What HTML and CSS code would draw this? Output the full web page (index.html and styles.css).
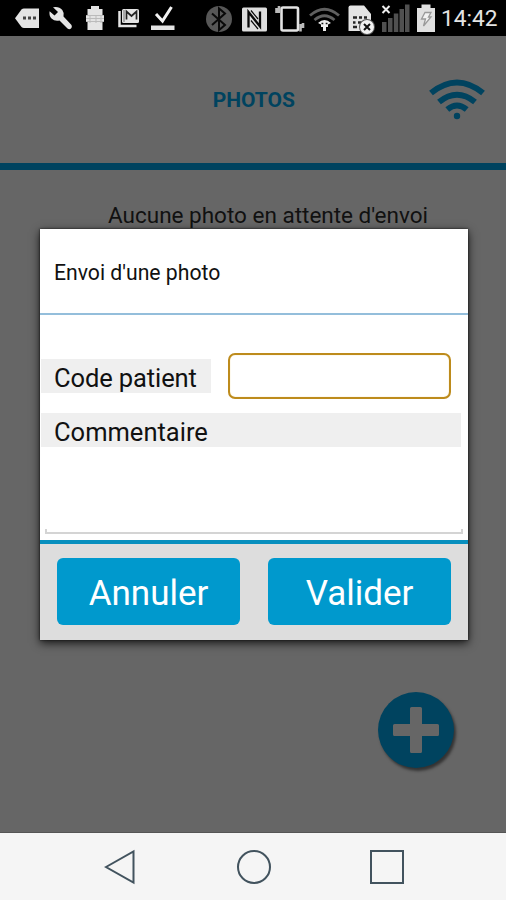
FILE: index.html
```html
<!DOCTYPE html>
<html lang="fr">
<head>
    <meta charset="UTF-8">
    <meta name="viewport" content="width=device-width, initial-scale=1.0">
    <title>Photos</title>
    <link rel="stylesheet" href="styles.css">
</head>
<body>
    <div class="status-bar">
        <!-- notifications -->
        <svg width="44" height="36" viewBox="0 0 44 36">
            <path d="M15 18.2L21.5 9.5Q22.500 8.500 24 8.500H39V28H24Q22.500 28 21.500 27Z" fill="#e4e4e4"/>
            <path d="M23 16.500h3v3h-3zM28 16.500h3v3h-3zM33 16.500h3v3h-3z" fill="#444"/>
        </svg>
        <svg width="34" height="36" viewBox="44 0 34 36">
            <path d="M53 7.200Q59 6 62.300 10Q64.500 13 63.500 16.500L71.500 25Q72.500 27 71 28.500Q69.300 29.800 67.500 28.500L59.500 20.500Q55 21.800 51.500 18.500Q48.800 15.500 49.600 11.200L54.500 15.500L58 12Z" fill="#e4e4e4"/>
        </svg>
        <svg width="34" height="36" viewBox="78 0 34 36">
            <path d="M91 6h8v3h3.500v6h1.500v7h-1.500v8h-15v-8H86v-7h1.500V9H91z" fill="#e4e4e4"/>
            <path d="M86 15.500h18M86 18.500h18M86 21.500h18M90 15v8M96 15v8M101 15v8" stroke="#bbb" fill="none"/>
        </svg>
        <svg width="34" height="36" viewBox="112 0 34 36">
            <path d="M119.500 11v15h17" stroke="#e4e4e4" stroke-width="2.500" fill="none"/>
            <rect x="122" y="9" width="17" height="14" rx="1.500" fill="#e4e4e4"/>
            <path d="M126.500 19.500v-8l5 4.500 5-4.500v8" stroke="#222" stroke-width="1.700" fill="none"/>
            <path d="M124 10v12" stroke="#aaa" stroke-width="2"/>
        </svg>
        <svg width="34" height="36" viewBox="146 0 34 36">
            <path d="M156 14l6.500 7L171.500 7" stroke="#f2f2f2" stroke-width="3" fill="none"/>
            <path d="M151 25.500h23.500v4.500H151z" fill="#e4e4e4"/>
        </svg>
        <!-- system -->
        <svg class="system" width="36" height="36" viewBox="202 0 36 36">
            <circle cx="219" cy="19" r="13" fill="#575757"/>
            <path d="M212 13.500l13 11.500-6 5V8.500l6 5-13 11.500" stroke="#090909" stroke-width="2" fill="none"/>
        </svg>
        <svg width="34" height="36" viewBox="238 0 34 36">
            <rect x="242" y="7.500" width="25" height="24" rx="1.500" fill="#dedede"/>
            <path d="M248.500 27.500V12L260 26.500V11.500" stroke="#080808" stroke-width="2.300" fill="none"/>
            <path d="M251 10.500l7 8.500M251 20.500l7 8.500" stroke="#080808" stroke-width="1.200"/>
        </svg>
        <svg width="35" height="36" viewBox="272 0 35 36">
            <rect x="281.500" y="7.500" width="16.500" height="23" rx="1.500" stroke="#e4e4e4" stroke-width="2.600" fill="none"/>
            <path d="M279 6v7M276.500 8v5M300.500 24v7.500M303 23v5" stroke="#bbb" stroke-width="2.600"/>
        </svg>
        <svg width="36" height="36" viewBox="307 0 36 36">
            <path d="M310 15.500Q324.500 3 339 15.500M314.500 20Q324.500 11.500 334.500 20" stroke="#606060" stroke-width="2.800" fill="none"/>
            <path d="M318 23q6.500-6 13 0l-3 1.500v2.500h-2v4h-3v-4h-2v-2.500z" fill="#eee"/>
            <path d="M321.500 23.500h1.800M325.700 23.500h1.800" stroke="#111" stroke-width="1.500"/>
        </svg>
        <svg width="34" height="36" viewBox="343 0 34 36">
            <path d="M348.500 7.500q0-2 2-2H364l7 8.500V31h-22.500z" fill="#e4e4e4"/>
            <path d="M353 17.500h4M353 22.500h2.500M353 27h4M359 17.500h3M358 22.500h3M364 17.500h3" stroke="#252525" stroke-width="2.500"/>
            <circle cx="367" cy="27" r="8" fill="#555"/>
            <circle cx="367" cy="27" r="7" fill="#f2f2f2"/>
            <path d="M364 24l6 6M370 24l-6 6" stroke="#111" stroke-width="2"/>
        </svg>
        <svg width="36" height="36" viewBox="377 0 36 36">
            <path d="M382.500 6l7 7M389.500 6l-7 7" stroke="#eee" stroke-width="2"/>
            <path d="M382 22h4.500v10H382zM388 18h4.500v14H388zM393.800 13.500h4.500V32h-4.500zM399.500 9h4.500v23h-4.500zM405 4.500h4.500V32H405z" fill="#505050"/>
        </svg>
        <svg width="28" height="36" viewBox="413 0 28 36">
            <path d="M421.500 4.500h9V8h4.500v24h-18V8h4.500z" fill="#e0e0e0"/>
            <path d="M425 12.500h6l-2.500 4.500h2.500l-7.500 9 2-7h-4z" fill="#f2f2f2" stroke="#999" stroke-width="1.300"/>
        </svg>
        <span class="clock">14:42</span>
    </div>

    <div class="app">
        <header class="app-header">
            <h1>PHOTOS</h1>
            <svg class="wifi" width="58" height="44" viewBox="0 0 58 44">
                <path d="M3 15Q29-6 55 15M11 24Q29 9.500 47 24M19.300 31.500Q29 23.500 38.700 31.500" stroke="#00435f" stroke-width="6" fill="none"/>
                <circle cx="29" cy="38" r="3.200" fill="#00435f"/>
            </svg>
        </header>
        <p class="empty">Aucune photo en attente d'envoi</p>
        <button class="add" aria-label="Ajouter">
            <svg width="46" height="46" viewBox="0 0 46 46">
                <path d="M18.500 0h9q1.500 0 1.500 1.500V17h15.500q1.500 0 1.500 1.500v9q0 1.500-1.500 1.500H29v15.500q0 1.500-1.500 1.500h-9q-1.500 0-1.500-1.500V29H1.500Q0 29 0 27.500v-9Q0 17 1.500 17H17V1.500Q17 0 18.500 0z" fill="#666"/>
            </svg>
        </button>
    </div>

    <form class="dialog">
        <h2>Envoi d'une photo</h2>
        <div class="fields">
            <div class="row">
                <label for="code">Code patient</label>
                <input type="text" id="code" name="code">
            </div>
            <label class="comment-label" for="comment">Commentaire</label>
            <textarea id="comment" name="comment"></textarea>
        </div>
        <div class="actions">
            <button type="button">Annuler</button>
            <button type="button">Valider</button>
        </div>
    </form>

    <nav class="nav-bar">
        <svg width="34" height="36" viewBox="0 0 34 36">
            <path d="M2 18L29.500 2.500v31z" stroke="#42535e" stroke-width="2" fill="none"/>
        </svg>
        <svg width="36" height="36" viewBox="0 0 36 36">
            <circle cx="18" cy="18" r="16" stroke="#42535e" stroke-width="2" fill="none"/>
        </svg>
        <svg width="36" height="36" viewBox="0 0 36 36">
            <rect x="2" y="2" width="32" height="32" stroke="#42535e" stroke-width="2" fill="none"/>
        </svg>
    </nav>
</body>
</html>
```
FILE: styles.css
```css
* {
    box-sizing: border-box;
}
body {
    margin: 0;
    width: 506px;
    height: 900px;
    display: flex;
    flex-direction: column;
    position: relative;
    overflow: hidden;
    font-family: Roboto, Arial, sans-serif;
    color: #111;
}
h1, h2, p {
    margin: 0;
    font-weight: normal;
}
svg {
    display: block;
    flex: none;
}
button {
    border: none;
    padding: 0;
    font-family: inherit;
}
.status-bar {
    display: flex;
    height: 36px;
    background-color: #000;
    color: #e4e4e4;
}
.status-bar .system {
    margin-left: 22px;
}
.clock {
    font-size: 22.7px;
    line-height: 38px;
    white-space: nowrap;
}
.app {
    height: 797px;
    position: relative;
    background-color: #666;
    border-bottom: 1px solid #555;
}
.app-header {
    display: flex;
    align-items: center;
    justify-content: flex-end;
    height: 134px;
    padding: 0 20px 0 0;
    border-bottom: 7px solid #00435f;
}
.app-header h1 {
    margin-right: 133px;
    font-size: 21px;
    font-weight: bold;
    color: #00435f;
}
.empty {
    padding: 31px 0 0 108px;
    font-size: 22.5px;
    line-height: 28px;
    white-space: nowrap;
}
.add {
    position: absolute;
    right: 52px;
    bottom: 64px;
    display: flex;
    align-items: center;
    justify-content: center;
    width: 76px;
    height: 76px;
    border-radius: 50%;
    background-color: #00435f;
    box-shadow: 2px 3px 3px rgba(0,0,0,0.5);
}
.dialog {
    position: absolute;
    top: 229px;
    left: 40px;
    width: 428px;
    height: 411px;
    background-color: #fff;
    box-shadow: 0 0 2px #111, 0 3px 9px rgba(0,0,0,0.8);
}
.dialog h2 {
    height: 86px;
    padding-left: 14px;
    border-bottom: 2px solid #94bedb;
    font-size: 21.2px;
    line-height: 87px;
}
.fields {
    height: 225px;
    padding: 38px 5px 0 1px;
    font-size: 25.5px;
}
.row {
    display: flex;
    align-items: center;
    height: 46px;
}
.row label {
    width: 170px;
    height: 34px;
    padding-left: 13px;
    line-height: 38px;
    letter-spacing: -0.1px;
    background-color: #efefef;
}
.row input {
    width: 223px;
    height: 46px;
    margin-left: 17px;
    border: 2px solid #bd8b1c;
    border-radius: 7px;
    box-shadow: inset 0 0 1px #e6bd50;
    font-size: 26px;
    outline: none;
}
.comment-label {
    display: block;
    width: 420px;
    height: 34px;
    margin-top: 14px;
    padding-left: 13px;
    line-height: 38px;
    background-color: #efefef;
}
.fields textarea {
    display: block;
    width: 418px;
    height: 87px;
    margin-left: 4px;
    border: 2px solid #d4d4d4;
    border-top: none;
    border-image: linear-gradient(to top, #d4d4d4 5px, transparent 5px) 2;
    resize: none;
    outline: none;
    font-size: 26px;
}
.actions {
    display: flex;
    gap: 28px;
    height: 100px;
    padding: 14px 17px 15px;
    border-top: 4px solid #078fbe;
    background-color: #ddd;
}
.actions button {
    width: 183px;
    height: 67px;
    padding-top: 3px;
    border-radius: 6px;
    background-color: #0099cd;
    color: #fff;
    font-size: 35px;
}
.nav-bar {
    display: flex;
    align-items: center;
    justify-content: space-between;
    height: 67px;
    padding: 0 101px 0 104px;
    background-color: #f5f5f5;
}
```
